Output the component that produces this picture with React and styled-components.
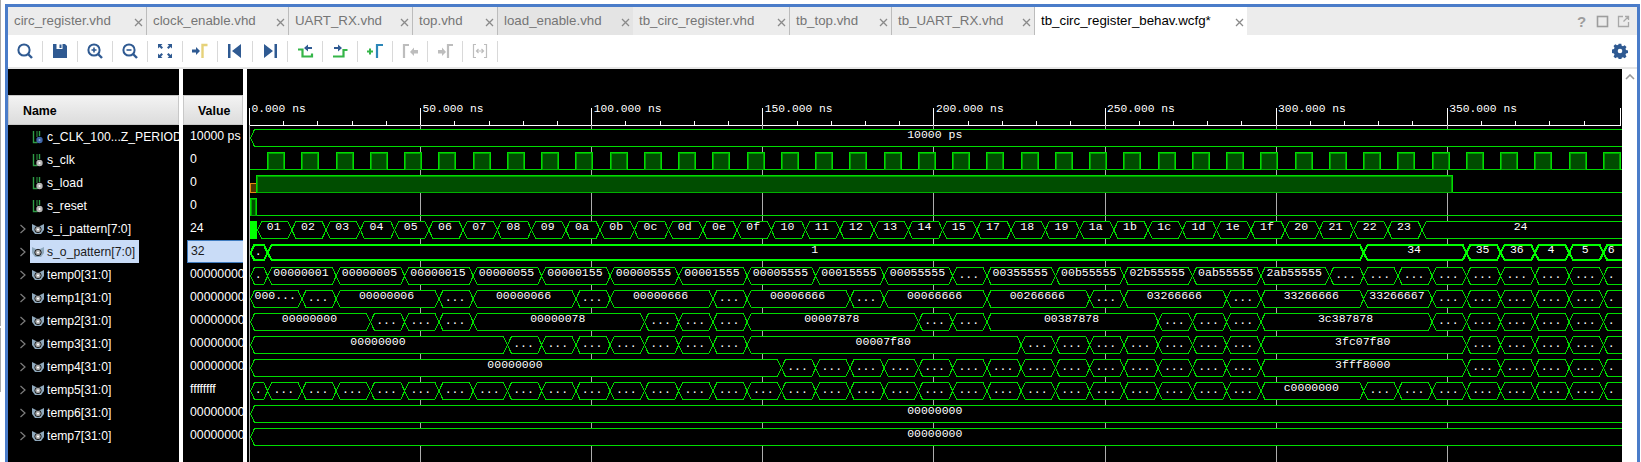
import React from 'react'
import styled, { createGlobalStyle } from 'styled-components'

const Global = createGlobalStyle`
  html, body {
    margin: 0;
    padding: 0;
    background: #fff;
    overflow: hidden;
  }
  body {
    font-family: "Liberation Sans", Arial, sans-serif;
  }
`

const NAVY = '#2f5a92'
const GREEN = '#35b548'
const MUTED = '#bdbdbd'

// one clock period on the time axis, first edge of the bus rows
const PERIOD = 34.25
const g = k => 267.7 + PERIOD * k
const WAVE_LEFT = 250
const WAVE_RIGHT = 1621
const OVERRUN = 1630

const dots = (from, to) => {
  const out = []
  for (let k = from; k <= to; k++) out.push([g(k), '...'])
  return out
}

const hexRows = {
  i: [
    ...['01', '02', '03', '04', '05', '06', '07', '08', '09', '0a', '0b', '0c', '0d', '0e', '0f', '10', '11', '12', '13', '14', '15', '17', '18', '19', '1a', '1b', '1c', '1d', '1e', '1f', '20', '21', '22', '23', '24']
      .map((v, j) => [257.6 + PERIOD * j, v])
  ],
  o: [[250.5, '.'], [g(0), '1'], [g(32), '34'], [g(35), '35'], [g(36), '36'], [g(37), '4'], [g(38), '5'], [g(39), '6']],
  t0: [
    [250.5, '.'], [g(0), '00000001'], [g(2), '00000005'], [g(4), '00000015'], [g(6), '00000055'], [g(8), '00000155'],
    [g(10), '00000555'], [g(12), '00001555'], [g(14), '00005555'], [g(16), '00015555'], [g(18), '00055555'],
    [g(20), '...'], [g(21), '00355555'], [g(23), '00b55555'], [g(25), '02b55555'], [g(27), '0ab55555'], [g(29), '2ab55555'],
    ...dots(31, 38), [g(39), '.']
  ],
  t1: [
    [250.5, '000...'], ...dots(1, 1), [g(2), '00000006'], ...dots(5, 5), [g(6), '00000066'], ...dots(9, 9),
    [g(10), '00000666'], ...dots(13, 13), [g(14), '00006666'], ...dots(17, 17), [g(18), '00066666'],
    [g(21), '00266666'], ...dots(24, 24), [g(25), '03266666'], ...dots(28, 28), [g(29), '33266666'], [g(32), '33266667'],
    ...dots(34, 38), [g(39), '.']
  ],
  t2: [
    [250.5, '00000000'], ...dots(3, 5), [g(6), '00000078'], ...dots(11, 13), [g(14), '00007878'], ...dots(19, 20),
    [g(21), '00387878'], ...dots(26, 28), [g(29), '3c387878'], ...dots(34, 38), [g(39), '.']
  ],
  t3: [[250.5, '00000000'], ...dots(7, 13), [g(14), '00007f80'], ...dots(22, 28), [g(29), '3fc07f80'], ...dots(35, 38), [g(39), '.']],
  t4: [[250.5, '00000000'], ...dots(15, 28), [g(29), '3fff8000'], ...dots(35, 38), [g(39), '.']],
  t5: [[250.5, '.'], ...dots(0, 28), [g(29), 'c0000000'], ...dots(32, 38), [g(39), '.']],
  full: [[250.5, '00000000']],
  period: [[250.5, '10000 ps']]
}

const tabs = [
  { name: 'circ_register.vhd', width: 139 },
  { name: 'clock_enable.vhd', width: 142 },
  { name: 'UART_RX.vhd', width: 124 },
  { name: 'top.vhd', width: 85 },
  { name: 'load_enable.vhd', width: 135, dim: true },
  { name: 'tb_circ_register.vhd', width: 157 },
  { name: 'tb_top.vhd', width: 102 },
  { name: 'tb_UART_RX.vhd', width: 143 },
  { name: 'tb_circ_register_behav.wcfg*', width: 212, active: true }
]

const signals = [
  { name: 'c_CLK_100...Z_PERIOD', value: '10000 ps', kind: 'const' },
  { name: 's_clk', value: '0', kind: 'logic' },
  { name: 's_load', value: '0', kind: 'logic' },
  { name: 's_reset', value: '0', kind: 'logic' },
  { name: 's_i_pattern[7:0]', value: '24', kind: 'bus' },
  { name: 's_o_pattern[7:0]', value: '32', kind: 'bus', selected: true },
  { name: 'temp0[31:0]', value: '00000000', kind: 'bus' },
  { name: 'temp1[31:0]', value: '00000000', kind: 'bus' },
  { name: 'temp2[31:0]', value: '00000000', kind: 'bus' },
  { name: 'temp3[31:0]', value: '00000000', kind: 'bus' },
  { name: 'temp4[31:0]', value: '00000000', kind: 'bus' },
  { name: 'temp5[31:0]', value: 'ffffffff', kind: 'bus' },
  { name: 'temp6[31:0]', value: '00000000', kind: 'bus' },
  { name: 'temp7[31:0]', value: '00000000', kind: 'bus' }
]

const Lens = ({ children }) => (
  <>
    <circle cx="9" cy="9" r="5.6" fill="none" stroke={NAVY} strokeWidth="2" />
    <path d="M13 13l4 4" stroke={NAVY} strokeWidth="2.4" />
    {children}
  </>
)

const toolIcons = {
  search: <Lens />,
  save: (
    <>
      <path d="M3 3h12l2 2v12H3z" fill={NAVY} />
      <rect x="6.5" y="3" width="6" height="5" fill="#fff" />
      <rect x="9.5" y="3.500" width="2" height="3.500" fill={NAVY} />
    </>
  ),
  zoomIn: <Lens><path d="M6.5 9h5M9 6.5v5" stroke={NAVY} strokeWidth="1.6" /></Lens>,
  zoomOut: <Lens><path d="M6.5 9h5" stroke={NAVY} strokeWidth="1.6" /></Lens>,
  fit: (
    <path
      d="M3 3h4.5L6 4.5l2 2L6.5 8l-2-2L3 7.5zM17 3v4.5L15.500 6l-2 2L12 6.500l2-2L12.500 3zM3 17v-4.500L4.500 14l2-2L8 13.500l-2 2L7.500 17zM17 17h-4.500L14 15.500l-2-2L13.500 12l2 2L17 12.500z"
      fill={NAVY}
    />
  ),
  prevMarker: (
    <>
      <path d="M2 8.500h4V6l4 4-4 4v-2.500H2z" fill={NAVY} />
      <path d="M12.500 17V4h5" fill="none" stroke="#e6d27a" strokeWidth="2.400" />
    </>
  ),
  first: <path d="M3 3h2.500v14H3zM16 3v14L7 10z" fill={NAVY} />,
  last: <path d="M17 3h-2.500v14H17zM4 3v14l9-7z" fill={NAVY} />,
  fallBack: (
    <>
      <path d="M3 8.500h4.500v7H17v-3" fill="none" stroke={GREEN} strokeWidth="2.200" />
      <path d="M17 6h-4V3.500L9 7l4 3.500V8h4z" fill={NAVY} />
    </>
  ),
  riseNext: (
    <>
      <path d="M3 15.500h10.500v-6.500h4" fill="none" stroke={GREEN} strokeWidth="2.200" />
      <path d="M4 6h4V3.500L12 7l-4 3.500V8H4z" fill={NAVY} />
    </>
  ),
  addMarker: (
    <>
      <path d="M2 10.500h6M5 7.500v6" stroke={GREEN} strokeWidth="2" />
      <path d="M12 17V4h6" fill="none" stroke="#2b86b8" strokeWidth="2.200" />
    </>
  ),
  prevOff: (
    <>
      <path d="M4 17V4h5" fill="none" stroke={MUTED} strokeWidth="2.200" />
      <path d="M18 9h-4V6.500L10 11l4 4v-2.500h4z" fill={MUTED} />
    </>
  ),
  nextOff: (
    <>
      <path d="M3 9h4V6.500l4 4.500-4 4v-2.500H3z" fill={MUTED} />
      <path d="M13 17V4h5" fill="none" stroke={MUTED} strokeWidth="2.200" />
    </>
  ),
  spanOff: (
    <path
      d="M3.500 3v14M4 3.500h2M4 16.500h2M16.500 3v14M14 3.500h2M14 16.500h2M7 10h6M8.500 8l-2 2 2 2M11.500 8l2 2-2 2"
      fill="none"
      stroke={MUTED}
      strokeWidth="1.200"
    />
  )
}

const toolOrder = [
  'search', 'save', 'zoomIn', 'zoomOut', 'fit', 'prevMarker', 'first', 'last',
  'fallBack', 'riseNext', 'addMarker', 'prevOff', 'nextOff', 'spanOff'
]

const Page = styled.div`
  display: flex;
  width: 1641px;
  height: 462px;
  overflow: hidden;
  background: #fff;
`

const Gutter = styled.div`
  width: 1px;
  height: 392px;
  margin-right: 4px;
  background: linear-gradient(#a9a9a9 0 326px, #fff 326px 328px, #a9a9a9 328px);
`

const Frame = styled.div`
  display: flex;
  flex-direction: column;
  width: 1635px;
  height: 458px;
  margin-top: 4px;
  box-sizing: border-box;
  border: 3px solid #4a7cc9;
  border-bottom: 0;
`

const TabBar = styled.div`
  display: flex;
  height: 28px;
  flex: none;
  background: #ececec;
`

const Tab = styled.div`
  display: flex;
  align-items: center;
  box-sizing: border-box;
  width: ${p => p.$width}px;
  padding: 0 2px 2px 6px;
  font-size: 13.3px;
  color: ${p => (p.$active ? '#000' : '#757575')};
  background: ${p => (p.$active ? '#fff' : p.$dim ? '#e4e4e4' : '#ececec')};
  border-right: ${p => (p.$active || p.$dim ? '0' : '1px solid #bcbcbc')};
  white-space: nowrap;
`

const TabClose = styled.svg`
  width: 9px;
  height: 9px;
  margin-left: auto;
  margin-right: 1px;
  margin-top: 4px;
`

const WindowControls = styled.div`
  display: flex;
  align-items: center;
  gap: 8px;
  margin-left: auto;
  padding-right: 7px;
  height: 28px;
  color: #9d9d9d;
`

const HelpMark = styled.span`
  width: 13px;
  font-size: 15px;
  font-weight: bold;
  text-align: center;
`

const WindowIcon = styled.svg`
  width: 13px;
  height: 13px;
`

const Toolbar = styled.div`
  display: flex;
  align-items: center;
  flex: none;
  height: 32px;
  background: #fff;
  border-bottom: 2px solid #e6e6e6;
`

const ToolButton = styled.div`
  display: flex;
  align-items: center;
  justify-content: center;
  box-sizing: border-box;
  width: 35px;
  height: 21px;
  border-right: 1px solid #d9d9d9;
`

const ToolIcon = styled.svg`
  width: 20px;
  height: 20px;
  margin-left: -1px;
`

const Gear = styled.svg`
  width: 16px;
  height: 16px;
  margin-left: auto;
  margin-right: 9px;
`

const Body = styled.div`
  display: flex;
  flex: 1;
  min-height: 0;
  background: #fff;
`

const Pane = styled.div`
  display: flex;
  flex-direction: column;
  flex: none;
  width: ${p => p.$width}px;
  margin-right: ${p => p.$gap}px;
  padding-top: 26px;
  box-sizing: border-box;
  background: #000;
  overflow: hidden;
`

const HeaderCell = styled.div`
  display: flex;
  align-items: center;
  flex: none;
  box-sizing: border-box;
  height: 30px;
  padding: 2px 0 0 ${p => p.$inset}px;
  font-size: 12.4px;
  font-weight: bold;
  color: #000;
  background: linear-gradient(#f3f3f3, #dcdcdc);
  border: 1px solid #c8c8c8;
`

const NameRow = styled.div`
  display: flex;
  align-items: center;
  flex: none;
  height: 23px;
  padding-left: 11px;
`

const Expander = styled.svg`
  flex: none;
  width: 8px;
  height: 10px;
  margin-right: 3px;
  visibility: ${p => (p.$shown ? 'visible' : 'hidden')};
`

const NameChip = styled.div`
  display: flex;
  align-items: center;
  height: 23px;
  padding-right: 4px;
  color: ${p => (p.$selected ? '#1b1b1b' : '#fff')};
  background: ${p => (p.$selected ? '#c9dcf7' : 'transparent')};
  font-size: 12.2px;
  white-space: nowrap;
`

const SignalIcon = styled.svg`
  flex: none;
  width: 14px;
  height: 14px;
  margin-left: 1px;
  margin-right: 2px;
`

const ValueRow = styled.div`
  flex: none;
  box-sizing: border-box;
  height: 23px;
  margin-left: ${p => (p.$selected ? '4px' : '0')};
  padding-left: ${p => (p.$selected ? '3px' : '7px')};
  font-size: 12.3px;
  line-height: ${p => (p.$selected ? '21px' : '23px')};
  white-space: nowrap;
  color: ${p => (p.$selected ? '#1b1b1b' : '#fff')};
  background: ${p => (p.$selected ? '#c9dcf7' : 'transparent')};
  border: ${p => (p.$selected ? '1px solid #3f7cc0' : '0')};
  border-right: 0;
`

const WaveSvg = styled.svg`
  display: block;
  flex: none;
  width: 1375px;
  height: 393px;
  background: #000;
`

const Scroller = styled.div`
  flex: none;
  width: 15px;
  display: flex;
  justify-content: center;
  padding-top: 5px;
  box-sizing: border-box;
`

const ScrollUp = styled.svg`
  width: 10px;
  height: 6px;
`

const monoFont = '"Liberation Mono", "Courier New", monospace'

const WaveText = ({ x, y, anchor = 'middle', size = 11.5, children }) => (
  <text x={x} y={y} fill="#fff" fontFamily={monoFont} fontSize={size} textAnchor={anchor} shapeRendering="auto">
    {children}
  </text>
)

const BusRow = ({ top, segs, bold }) => {
  const topY = top + 0.5
  const botY = top + (bold ? 16.3 : 17.5)
  const mid = top + 9
  const stroke = bold ? '#00ff00' : '#00dc00'
  return (
    <g>
      {segs.map(([a], i) => {
        const b = i + 1 < segs.length ? segs[i + 1][0] : OVERRUN
        const points = `${a},${mid} ${a + 4},${topY} ${b - 4},${topY} ${b},${mid} ${b - 4},${botY} ${a + 4},${botY}`
        return <polygon key={i} points={points} fill="#000" stroke={stroke} strokeWidth={bold ? 2 : 1} />
      })}
      {segs.map(([a, label], i) => {
        const b = i + 1 < segs.length ? segs[i + 1][0] : WAVE_RIGHT
        const lift = label === '...' || label === '.' ? 1.5 : 0
        return <WaveText key={i} x={(a + b) / 2 - 1} y={mid + lift}>{label}</WaveText>
      })}
    </g>
  )
}

const HighPulse = ({ x, w, top }) => (
  <>
    <rect x={x} y={top + 0.5} width={w} height={17} fill="#004d00" />
    <path d={`M${x + 1} ${top + 17}V${top + 1.5}H${x + w - 1}V${top + 17}`} fill="none" stroke="#00a000" />
    <path d={`M${x} ${top + 17.5}V${top + 0.5}H${x + w}V${top + 17.5}`} fill="none" stroke="#00dc00" />
    <path d={`M${x} ${top + 17}H${x + w}`} stroke="#00b000" />
  </>
)

const Waves = () => {
  const majors = []
  const minors = []
  for (let n = 0; n < 8; n++) majors.push(249.5 + 171.1 * n)
  for (let n = 1; n < 40; n++) {
    if (n % 5) minors.push(249.5 + 34.22 * n)
  }
  const pulses = []
  for (let x = g(0); x < WAVE_RIGHT; x += PERIOD) pulses.push(x)

  return (
    <WaveSvg viewBox="247 69 1375 393" shapeRendering="crispEdges">
      {/* time ruler */}
      <path d={`M${WAVE_LEFT} 125.5H${WAVE_RIGHT}`} stroke="#fff" />
      {minors.map(x => <path key={x} d={`M${x} 121V125`} stroke="#fff" />)}
      {majors.map((x, n) => (
        <g key={x}>
          <path d={`M${x} 108V125`} stroke="#fff" />
          <path d={`M${x} 125V462`} stroke="#adadad" />
          <WaveText x={x + 2} y={112} anchor="start" size={11.3}>{`${n * 50}.000 ns`}</WaveText>
        </g>
      ))}
      <path d={`M${WAVE_RIGHT - 0.5} 108V125`} stroke="#fff" />

      <BusRow top={129} segs={hexRows.period} />

      {/* s_clk */}
      <path d={`M${WAVE_LEFT} 169.500H${WAVE_RIGHT + 1}`} stroke="#00dc00" />
      {pulses.map(x => <HighPulse key={x} x={x} w={17} top={152} />)}

      {/* s_load */}
      <rect x="250.500" y="183.500" width="5.500" height="8.500" fill="#4f3300" stroke="#e08a10" />
      <HighPulse x={256.7} w={1196} top={175} />
      <path d={`M1452.700 192.500H${WAVE_RIGHT + 1}`} stroke="#00dc00" />

      {/* s_reset */}
      <HighPulse x={250.5} w={6.2} top={198} />
      <path d={`M256.700 215.500H${WAVE_RIGHT + 1}`} stroke="#00dc00" />

      <rect x="250" y="221" width="7" height="18" fill="#00ff00" />
      <BusRow top={221} segs={hexRows.i} />
      <BusRow top={244} segs={hexRows.o} bold />
      <BusRow top={267} segs={hexRows.t0} />
      <BusRow top={290} segs={hexRows.t1} />
      <BusRow top={313} segs={hexRows.t2} />
      <BusRow top={336} segs={hexRows.t3} />
      <BusRow top={359} segs={hexRows.t4} />
      <BusRow top={382} segs={hexRows.t5} />
      <BusRow top={405} segs={hexRows.full} />
      <BusRow top={428} segs={hexRows.full} />
    </WaveSvg>
  )
}

const SignalGlyph = ({ kind }) => {
  if (kind === 'bus') {
    return (
      <SignalIcon viewBox="0 0 14 14" shapeRendering="geometricPrecision">
        <path d="M1 2l4 2h4l4-2v6l-3 4H4L1 8z" fill="#8fa9bd" />
        <circle cx="7" cy="7.500" r="3.200" fill="#a8a8a8" stroke="#000" strokeWidth="0.800" />
        <circle cx="7" cy="7.500" r="1.100" fill="#fff" />
      </SignalIcon>
    )
  }
  return (
    <SignalIcon viewBox="0 0 14 14">
      <path d="M2.500 1v11.500H6.500M8.500 1v5" fill="none" stroke="#2f9c46" strokeWidth="1.400" />
      <path d="M6 1v6" stroke="#2f9c46" strokeWidth="1" />
      <circle cx="8.500" cy="10" r="3.200" fill={kind === 'const' ? '#3f66a8' : '#b5b5b5'} />
      <circle cx="8.500" cy="10" r="1" fill={kind === 'const' ? '#8fa9d8' : '#fff'} />
    </SignalIcon>
  )
}

export default function App() {
  return (
    <Page>
      <Global />
      <Gutter />
      <Frame>
        <TabBar>
          {tabs.map(tab => (
            <Tab key={tab.name} $width={tab.width} $active={tab.active} $dim={tab.dim}>
              {tab.name}
              <TabClose viewBox="0 0 9 9">
                <path d="M1 1l7 7M8 1L1 8" stroke="#8a8a8a" strokeWidth="1.300" />
              </TabClose>
            </Tab>
          ))}
          <WindowControls>
            <HelpMark>?</HelpMark>
            <WindowIcon viewBox="0 0 13 13">
              <rect x="1.500" y="1.500" width="10" height="10" fill="none" stroke="#9d9d9d" strokeWidth="1.600" />
            </WindowIcon>
            <WindowIcon viewBox="0 0 13 13">
              <path d="M6 1.500H1.500v10h10V7M8 1.500h3.500V5M11.500 1.500L6.500 6.500" fill="none" stroke="#a8a8a8" strokeWidth="1.300" />
            </WindowIcon>
          </WindowControls>
        </TabBar>

        <Toolbar>
          {toolOrder.map(id => (
            <ToolButton key={id}>
              <ToolIcon viewBox="0 0 20 20">{toolIcons[id]}</ToolIcon>
            </ToolButton>
          ))}
          <Gear viewBox="0 0 16 16">
            <path
              d="M6.700 1h2.600l.4 1.900 1.300.6 1.700-1 1.800 1.800-1 1.700.5 1.300 2 .4v2.600l-2 .4-.5 1.300 1 1.700-1.800 1.800-1.700-1-1.300.5-.4 2H6.700l-.4-2-1.300-.5-1.700 1-1.800-1.800 1-1.700-.5-1.300-2-.4V6.700l2-.4.500-1.300-1-1.700 1.800-1.800 1.700 1 1.300-.6z"
              fill="#2f5a92"
              transform="translate(0 -.2)"
            />
            <circle cx="8" cy="8" r="2.300" fill="#fff" />
          </Gear>
        </Toolbar>

        <Body>
          <Pane $width={171} $gap={4}>
            <HeaderCell $inset={14}>Name</HeaderCell>
            {signals.map(s => (
              <NameRow key={s.name}>
                <Expander viewBox="0 0 8 10" $shown={s.kind === 'bus'}>
                  <path d="M1.500 1l4.500 4-4.500 4" fill="none" stroke="#7d7d7d" strokeWidth="1.200" />
                </Expander>
                <NameChip $selected={s.selected}>
                  <SignalGlyph kind={s.kind} />
                  {s.name}
                </NameChip>
              </NameRow>
            ))}
          </Pane>
          <Pane $width={60} $gap={4}>
            <HeaderCell $inset={14}>Value</HeaderCell>
            {signals.map(s => (
              <ValueRow key={s.name} $selected={s.selected}>{s.value}</ValueRow>
            ))}
          </Pane>
          <Waves />
          <Scroller>
            <ScrollUp viewBox="0 0 10 6">
              <path d="M1 5l4-4 4 4" fill="none" stroke="#9a9a9a" strokeWidth="1.600" />
            </ScrollUp>
          </Scroller>
        </Body>
      </Frame>
    </Page>
  )
}
